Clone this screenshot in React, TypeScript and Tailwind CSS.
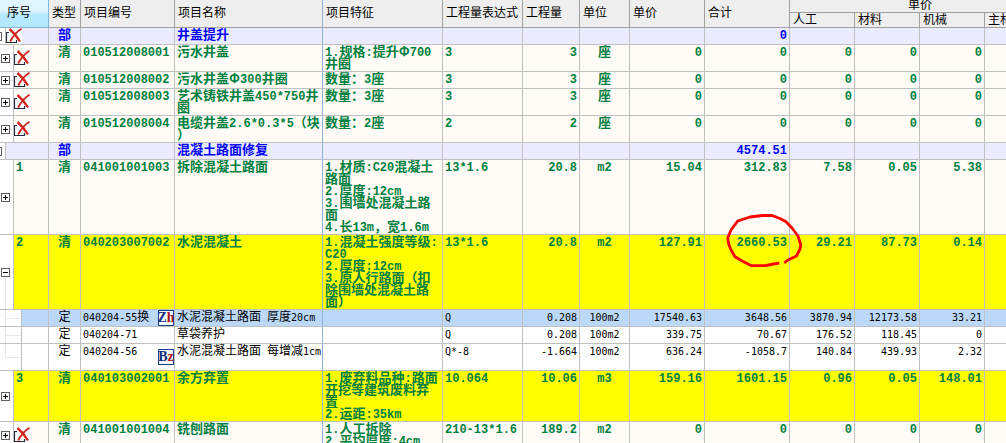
import { useState, type ReactNode } from "react";

type Kind = "section" | "item" | "quota";

interface Row {
  kind: Kind;
  no?: string;
  excluded?: boolean;
  type: string;
  code?: string;
  badge?: [string, string];
  name: string;
  features?: string[];
  expr?: string;
  qty?: string;
  unit?: string;
  values: string[];
  tone: string;
  height: string;
  open?: boolean;
  marked?: boolean;
  last?: boolean;
}

const CREAM = "bg-[#fffcf7]";
const LILAC = "bg-[#ebebff]";
const YELLOW = "bg-[#ffff00]";
const ZEROS = ["0", "0", "0", "0", "0"];

const rows: Row[] = [
  { kind: "section", excluded: true, type: "部", name: "井盖提升", values: ["", "0", "", "", ""], tone: LILAC, height: "h-[17px]" },
  { kind: "item", excluded: true, type: "清", code: "010512008001", name: "污水井盖", features: ["1.规格:提升Φ700", "井圈"], expr: "3", qty: "3", unit: "座", values: ZEROS, tone: CREAM, height: "h-[27px]" },
  { kind: "item", excluded: true, type: "清", code: "010512008002", name: "污水井盖Φ300井圈", features: ["数量：3座"], expr: "3", qty: "3", unit: "座", values: ZEROS, tone: CREAM, height: "h-[17px]" },
  { kind: "item", excluded: true, type: "清", code: "010512008003", name: "艺术铸铁井盖450*750井\n圈", features: ["数量：3座"], expr: "3", qty: "3", unit: "座", values: ZEROS, tone: CREAM, height: "h-[27px]" },
  { kind: "item", excluded: true, type: "清", code: "010512008004", name: "电缆井盖2.6*0.3*5（块\n）", features: ["数量：2座"], expr: "2", qty: "2", unit: "座", values: ZEROS, tone: CREAM, height: "h-[27px]" },
  { kind: "section", type: "部", name: "混凝土路面修复", values: ["", "4574.51", "", "", ""], tone: LILAC, height: "h-[17px]" },
  { kind: "item", no: "1", type: "清", code: "041001001003", name: "拆除混凝土路面", features: ["1.材质:C20混凝土", "路面", "2.厚度:12cm", "3.围墙处混凝土路", "面", "4.长13m，宽1.6m"], expr: "13*1.6", qty: "20.8", unit: "m2", values: ["15.04", "312.83", "7.58", "0.05", "5.38"], tone: CREAM, height: "h-[75px]" },
  { kind: "item", no: "2", type: "清", code: "040203007002", name: "水泥混凝土", features: ["1.混凝土强度等级:", "C20", "2.厚度:12cm", "3.原人行路面（扣", "除围墙处混凝土路", "面）"], expr: "13*1.6", qty: "20.8", unit: "m2", values: ["127.91", "2660.53", "29.21", "87.73", "0.14"], tone: YELLOW, height: "h-[75px]", open: true, marked: true },
  { kind: "quota", type: "定", code: "040204-55换", badge: ["Z", "h"], name: "水泥混凝土路面 厚度20cm", expr: "Q", qty: "0.208", unit: "100m2", values: ["17540.63", "3648.56", "3870.94", "12173.58", "33.21"], tone: "bg-[#bbd9f7]", height: "h-[17px]" },
  { kind: "quota", type: "定", code: "040204-71", name: "草袋养护", expr: "Q", qty: "0.208", unit: "100m2", values: ["339.75", "70.67", "176.52", "118.45", "0"], tone: "bg-white", height: "h-[17px]" },
  { kind: "quota", type: "定", code: "040204-56", badge: ["B", "z"], name: "水泥混凝土路面 每增减1cm", expr: "Q*-8", qty: "-1.664", unit: "100m2", values: ["636.24", "-1058.7", "140.84", "439.93", "2.32"], tone: "bg-white", height: "h-[27px]", last: true },
  { kind: "item", no: "3", type: "清", code: "040103002001", name: "余方弃置", features: ["1.废弃料品种:路面", "开挖等建筑废料弃", "置", "2.运距:35km"], expr: "10.064", qty: "10.06", unit: "m3", values: ["159.16", "1601.15", "0.96", "0.05", "148.01"], tone: YELLOW, height: "h-[51px]" },
  { kind: "item", excluded: true, type: "清", code: "041001001004", name: "铣刨路面", features: ["1.人工拆除", "2.平均厚度:4cm"], expr: "210-13*1.6", qty: "189.2", unit: "m2", values: ZEROS, tone: CREAM, height: "h-[27px]" },
];

/* Chinese runs are set a little larger than the monospaced Latin beside them. */
function Mixed({ text, bold }: { text: string; bold: boolean }) {
  const runs = text.split(/([Φ\u3000-\u9fff\uff00-\uffef]+)/).filter(Boolean);
  return (
    <>
      {runs.map((run, i) =>
        /[Φ\u3000-\u9fff\uff00-\uffef]/.test(run) ? (
          <span key={i} className={`font-['Noto_Sans_CJK_SC',sans-serif] leading-[0] ${bold ? "text-[13px]" : "text-[12px]"}`}>
            {run}
          </span>
        ) : (
          run
        ),
      )}
    </>
  );
}

function ExcludedIcon() {
  return (
    <svg className="block h-4 w-4 bg-white" viewBox="0 0 16 16" aria-hidden="true">
      <path d="M3 4.5H.5V14.5H10.5V12" fill="none" stroke="#252a3a" strokeWidth="1.2" />
      <path d="M3.5 1C6.5 3.500 10.500 8 14 13.500" fill="none" stroke="#d8221c" strokeWidth="2.300" />
      <path d="M15.500 .8C11 3.500 7 8 4.200 13.500" fill="none" stroke="#c8281f" strokeWidth="1.900" />
    </svg>
  );
}

function Toggle({ open, label, onClick }: { open: boolean; label: string; onClick?: () => void }) {
  return (
    <button type="button" aria-expanded={open} aria-label={label} onClick={onClick} className="relative ml-px block h-[9px] w-[9px] bg-white">
      <svg viewBox="0 0 9 9" className="block h-[9px] w-[9px]" aria-hidden="true" shapeRendering="crispEdges">
        <rect x=".5" y=".5" width="8" height="8" fill="#fff" stroke="#606060" />
        <path d={open ? "M2 4.5H7" : "M2 4.5H7M4.5 2V7"} stroke="#000" />
      </svg>
    </button>
  );
}

function Gutter({ row, open, onToggle }: { row: Row; open: boolean; onToggle: () => void }) {
  const line = "absolute bg-[#e8e8e8]";
  if (row.kind === "section") {
    return (
      <td className="overflow-hidden border-r border-b border-[#c0c0c0] bg-white p-0 align-middle">
        <svg viewBox="0 0 5 9" className="block h-[9px] w-[5px]" aria-hidden="true" shapeRendering="crispEdges">
          <path d="M0 .5H1.5V8.500H0" fill="none" stroke="#606060" />
        </svg>
      </td>
    );
  }
  if (row.kind === "item") {
    return (
      <td colSpan={2} className="relative border-r border-b border-[#c0c0c0] bg-white p-0 align-middle">
        <span className={`${line} top-1/2 right-0 h-px w-[3px]`} />
        {open && <span className={`${line} top-1/2 bottom-0 left-[5px] w-px`} />}
        <Toggle open={open} label={`${open ? "收起" : "展开"} ${row.name}`} onClick={onToggle} />
      </td>
    );
  }
  return (
    <td colSpan={3} className="relative border-r border-b border-[#c0c0c0] bg-white p-0">
      <span className={`${line} top-0 left-[5px] w-px ${row.last ? "h-1/2" : "h-full"}`} />
      <span className={`${line} top-1/2 right-0 left-[5px] h-px`} />
    </td>
  );
}

function Mark() {
  return (
    <svg className="pointer-events-none absolute -top-[21px] left-[20px] z-10 h-[54px] w-[80px]" viewBox="725 214 80 54" aria-hidden="true">
      <path
        d="M779.300 263L771 264.500 765 265.600H751L743 261.500 735 256.700 731 250 728.700 244 727.700 238 731 230 737.700 221 750 217 763 215.500H772L780 218.500 786 221.700 792 228 798 236 800.800 245 800 249 796.500 256 788 260 784.300 263"
        fill="none"
        stroke="#f00"
        strokeWidth="2.800"
        strokeLinejoin="round"
      />
    </svg>
  );
}

const cell = "border-r border-b border-[#c0c0c0] px-[2px] pt-[2px] pb-0 align-top whitespace-pre";

function Num({ children, text, bold }: { children?: ReactNode; text: string; bold: boolean }) {
  return (
    <td className={`${cell} relative text-right`}>
      <Mixed text={text} bold={bold} />
      {children}
    </td>
  );
}

function SheetRow({ row, open, onToggle }: { row: Row; open: boolean; onToggle: () => void }) {
  const bold = row.kind !== "quota";
  const text =
    row.kind === "section"
      ? "text-[12px] font-bold text-[#0000ff]"
      : row.kind === "item"
        ? "text-[12px] font-bold text-[#008040]"
        : "text-[10px] font-['DejaVu_Sans_Mono',monospace] text-black";
  const noSpan = row.kind === "section" ? 3 : row.kind === "item" ? 2 : 1;
  return (
    <tr className={`${row.height} ${row.tone} ${text} leading-[12px]`}>
      <Gutter row={row} open={open} onToggle={onToggle} />
      <td colSpan={noSpan} className={`border-r border-b border-[#c0c0c0] ${row.excluded ? "p-0 align-middle" : "px-[2px] pt-[2px] pb-0 align-top"}`}>
        {row.excluded ? <ExcludedIcon /> : row.no}
      </td>
      <td className={`${cell} text-center`}>
        <Mixed text={row.type} bold={bold} />
      </td>
      <td className={`${cell} relative`}>
        <Mixed text={row.code ?? ""} bold={bold} />
        {row.badge && (
          <span className="absolute inset-y-0 right-0 my-auto flex h-4 w-4 items-end justify-center overflow-hidden border border-[#1c3f8c] bg-[#f2f5fb] font-['Liberation_Serif',serif] text-[14px] leading-[14px] font-bold text-[#16307c]">
            {row.badge[0]}
            <span className="text-[#b01020]">{row.badge[1]}</span>
          </span>
        )}
      </td>
      <td className={`${cell} border-r-[#8fb2d6]`}>
        <Mixed text={row.name} bold={bold} />
      </td>
      <td className={cell}>
        <Mixed text={(row.features ?? []).join("\n")} bold={bold} />
      </td>
      <td className={cell}>{row.expr}</td>
      <Num text={row.qty ?? ""} bold={bold} />
      <td className={`${cell} text-center`}>
        <Mixed text={row.unit ?? ""} bold={bold} />
      </td>
      {row.values.map((value, i) => (
        <Num key={i} text={value} bold={bold}>
          {row.marked && i === 1 && <Mark />}
        </Num>
      ))}
      <td className={cell} />
    </tr>
  );
}

function Head({ label, className = "", sub = false }: { label: string; className?: string; sub?: boolean }) {
  return (
    <th scope="col" rowSpan={sub ? 1 : 2} className={`border-r border-b border-[#a0a0a0] px-[3px] pb-0 text-left align-middle font-normal whitespace-nowrap ${sub ? "pt-[2px]" : "pt-px"} ${className}`}>
      {label}
    </th>
  );
}

export default function App() {
  const [open, setOpen] = useState(true);
  const visible = rows.filter((row) => open || row.kind !== "quota");
  return (
    <main className="h-screen overflow-hidden bg-white font-['Liberation_Mono','Noto_Sans_CJK_SC',monospace]">
      <table className="w-full min-w-[1050px] table-fixed border-separate border-spacing-0">
        <colgroup>
          <col className="w-[6px]" />
          <col className="w-[8px]" />
          <col className="w-[8px]" />
          <col className="w-[27px]" />
          <col className="w-[32px]" />
          <col className="w-[94px]" />
          <col className="w-[148px]" />
          <col className="w-[120px]" />
          <col className="w-[80px]" />
          <col className="w-[57px]" />
          <col className="w-[50px]" />
          <col className="w-[75px]" />
          <col className="w-[85px]" />
          <col className="w-[65px]" />
          <col className="w-[65px]" />
          <col className="w-[65px]" />
          <col />
        </colgroup>
        <thead className="bg-[#eeeeee] text-[12px] leading-[12px] text-black">
          <tr className="h-[13px]">
            <th scope="col" colSpan={4} rowSpan={2} className="border-r border-b border-[#7fb6d6] bg-linear-to-b from-[#dff5ff] from-40% to-[#b5e8fc] to-55% px-[7px] pt-px pb-0 text-left align-middle font-normal">
              序号
            </th>
            <Head label="类型" />
            <Head label="项目编号" />
            <Head label="项目名称" className="border-r-[#8fb2d6]" />
            <Head label="项目特征" />
            <Head label="工程量表达式" />
            <Head label="工程量" />
            <Head label="单位" />
            <Head label="单价" />
            <Head label="合计" />
            <th scope="colgroup" colSpan={4} className="border-b border-[#a0a0a0] p-0 text-center align-middle font-normal">
              单价
            </th>
          </tr>
          <tr className="h-[15px]">
            <Head sub label="人工" />
            <Head sub label="材料" />
            <Head sub label="机械" />
            <Head sub label="主材" />
          </tr>
        </thead>
        <tbody>
          {visible.map((row, i) => (
            <SheetRow key={`${row.code ?? row.name}-${i}`} row={row} open={row.open === true && open} onToggle={() => row.open && setOpen(!open)} />
          ))}
        </tbody>
      </table>
    </main>
  );
}
